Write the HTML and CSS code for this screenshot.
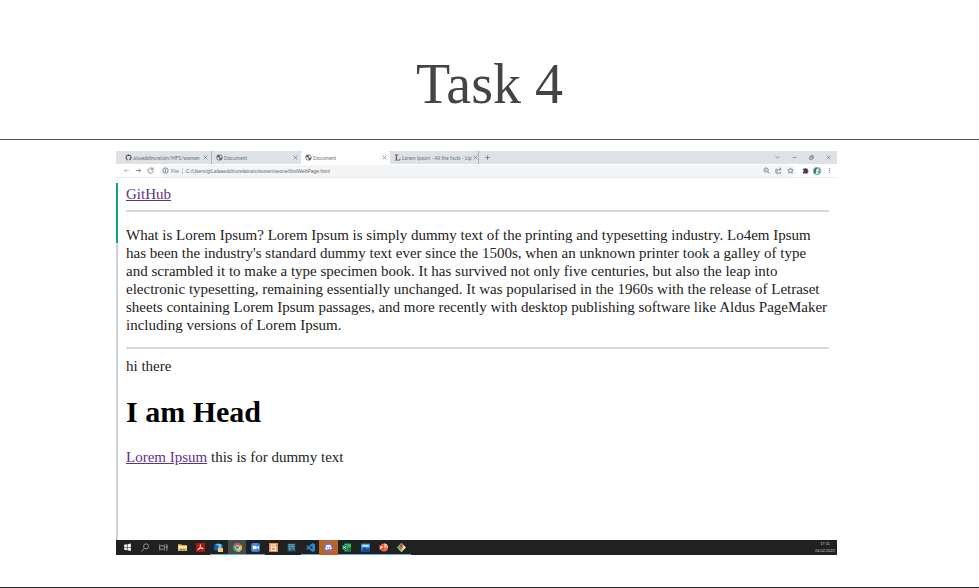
FILE: index.html
```html
<!DOCTYPE html>
<html lang="en">
<head>
<meta charset="utf-8">
<meta name="viewport" content="width=device-width, initial-scale=1">
<title>Task 4</title>
<link rel="stylesheet" href="styles.css">
</head>
<body>
<header class="slide-header"><h1 class="slide-title">Task 4</h1></header>
<main class="slide-body">
  <div class="desktop">
    <div class="tabbar">
      <div class="tab">
        <svg class="icon" viewBox="0 0 16 16"><path fill="#3c4043" d="M8 1a7 7 0 0 0-2.2 13.6c.4.1.5-.1.5-.3v-1.400c-2 .4-2.400-.8-2.400-.8-.5-1-1-1.200-1-1.200 1-.2 1.500.8 1.500.8.7 1.100 1.600.8 2 .6 0-.5.200-.8.500-1C4.700 11 3.700 10.200 3.700 7.800c0-.8.300-1.400.700-1.900-.1-.3-.3-1 .1-1.900 0 0 .6-.2 1.900.7a6.500 6.500 0 0 1 3.400 0c1.300-.9 1.900-.7 1.900-.7.400.9.100 1.600.1 1.900.4.500.7 1.100.7 1.900 0 2.400-1.200 3.200-3.100 3.400.3.300.5.700.5 1.400v1.700c0 .2.100.4.500.3A7 7 0 0 0 8 1z"/></svg>
        <span class="tab-text">alaaeddinurelain/MFS/women</span>
        <button class="tab-close" aria-label="Close tab"><svg class="cross" viewBox="0 0 8 8"><path d="M1 1l6 6M7 1l-6 6"/></svg></button>
      </div>
      <div class="tab divided">
        <svg class="icon" viewBox="0 0 16 16"><circle cx="8" cy="8" r="7" fill="#5f6368"/><path fill="#dee1e6" d="M3 7l4 1 1 3-1 3-4-3zM8 3l5 1v4l-3 1-1-3z"/></svg>
        <span class="tab-text">Document</span>
        <button class="tab-close" aria-label="Close tab"><svg class="cross" viewBox="0 0 8 8"><path d="M1 1l6 6M7 1l-6 6"/></svg></button>
      </div>
      <div class="tab active">
        <svg class="icon" viewBox="0 0 16 16"><circle cx="8" cy="8" r="7" fill="#5f6368"/><path fill="#fff" d="M3 7l4 1 1 3-1 3-4-3zM8 3l5 1v4l-3 1-1-3z"/></svg>
        <span class="tab-text">Document</span>
        <button class="tab-close" aria-label="Close tab"><svg class="cross" viewBox="0 0 8 8"><path d="M1 1l6 6M7 1l-6 6"/></svg></button>
      </div>
      <div class="tab">
        <svg class="icon" viewBox="0 0 16 16"><path fill="#5f6368" d="M2 1h8v2H7v10h5l1-3h2l-1 5H2v-2h2V3H2z"/></svg>
        <span class="tab-text">Lorem Ipsum - All the facts - Lip</span>
        <button class="tab-close" aria-label="Close tab"><svg class="cross" viewBox="0 0 8 8"><path d="M1 1l6 6M7 1l-6 6"/></svg></button>
      </div>
      <button class="new-tab" aria-label="New tab"><svg class="cross" viewBox="0 0 8 8"><path d="M4 0v8M0 4h8"/></svg></button>
      <div class="window-controls">
        <button aria-label="Search tabs"><svg class="cross" viewBox="0 0 8 8"><path d="M1 2l3 3 3-3"/></svg></button>
        <button aria-label="Minimize"><svg class="cross" viewBox="0 0 8 8"><path d="M1 4h6"/></svg></button>
        <button aria-label="Restore"><svg class="cross" viewBox="0 0 8 8"><path d="M1 3h4v4H1zM3 3V1h4v4H5"/></svg></button>
        <button aria-label="Close window"><svg class="cross" viewBox="0 0 8 8"><path d="M1 1l6 6M7 1l-6 6"/></svg></button>
      </div>
    </div>
    <div class="toolbar">
      <button class="tool" aria-label="Back"><svg class="icon line faint" viewBox="0 0 16 16"><path d="M14 8H3M7 4L3 8l4 4"/></svg></button>
      <button class="tool" aria-label="Forward"><svg class="icon line" viewBox="0 0 16 16"><path d="M2 8h11M9 4l4 4-4 4"/></svg></button>
      <button class="tool" aria-label="Reload"><svg class="icon line" viewBox="0 0 16 16"><path d="M13 5a6 6 0 1 0 1 4M14 1v5H9"/></svg></button>
      <div class="omnibox">
        <svg class="icon line" viewBox="0 0 16 16"><circle cx="8" cy="8" r="6"/><path d="M8 7v5M8 4v2"/></svg>
        <label class="scheme" for="address">File</label>
        <input id="address" class="address" type="text" value="C:/Users/g/Lalaaeddinurelainoic/wosen/seone/firstWebPage.html">
        <button class="tool" aria-label="Zoom"><svg class="icon line" viewBox="0 0 16 16"><circle cx="7" cy="7" r="5"/><path d="M11 11l4 4M5 7h4"/></svg></button>
        <button class="tool" aria-label="Share"><svg class="icon line" viewBox="0 0 16 16"><path d="M6 5H2v9h11v-3M5 11c0-4 3-6 8-6M10 2l4 3-4 3"/></svg></button>
        <button class="tool" aria-label="Bookmark"><svg class="icon line" viewBox="0 0 16 16"><path d="M8 2l2 4 4 .5-3 3 1 4.500-4-2-4 2 1-4.500-3-3L6 6z"/></svg></button>
      </div>
      <button class="tool" aria-label="Extensions"><svg class="icon" viewBox="0 0 16 16"><path fill="#3c4043" d="M2 4h4a2 2 0 0 1 4 0h3v4a2 2 0 0 1 0 4v3H2v-4a2 2 0 0 0 0-4z"/></svg></button>
      <button class="tool" aria-label="Profile"><svg class="avatar" viewBox="0 0 16 16"><circle cx="8" cy="8" r="8" fill="#6fa8a5"/><path fill="#e8f0ee" d="M7 3l5 1-1 4-3 1 4 4-7 1 1-6z"/><path fill="#2c6870" d="M4 3l4-1-2 5-1 6-3-3z"/></svg></button>
      <button class="tool" aria-label="Menu"><svg class="icon" viewBox="0 0 16 16"><g fill="#80868b"><circle cx="8" cy="3" r="1.500"/><circle cx="8" cy="8" r="1.500"/><circle cx="8" cy="13" r="1.500"/></g></svg></button>
    </div>
    <article class="page">
      <a class="link" href="#github">GitHub</a>
      <hr class="rule">
      <p class="lorem">What is Lorem Ipsum? Lorem Ipsum is simply dummy text of the printing and typesetting industry. Lo4em Ipsum<br>has been the industry's standard dummy text ever since the 1500s, when an unknown printer took a galley of type<br>and scrambled it to make a type specimen book. It has survived not only five centuries, but also the leap into<br>electronic typesetting, remaining essentially unchanged. It was popularised in the 1960s with the release of Letraset<br>sheets containing Lorem Ipsum passages, and more recently with desktop publishing software like Aldus PageMaker<br>including versions of Lorem Ipsum.</p>
      <hr class="rule">
      <div>hi there</div>
      <h2 class="head">I am Head</h2>
      <div><a class="link" href="#lorem">Lorem Ipsum</a> this is for dummy text</div>
    </article>
    <footer class="taskbar">
      <nav class="apps" aria-label="Apps">
        <button class="app" aria-label="Start"><svg viewBox="0 0 16 16"><path fill="#f4f4f4" d="M2 3l5-1v5H2zM8 2l6-1v6H8zM2 8h5v5l-5-1zM8 8h6v6l-6-1z"/></svg></button>
        <button class="app" aria-label="Search"><svg viewBox="0 0 16 16"><path fill="none" stroke="#aaa" stroke-width="1.500" d="M6 10l-5 5"/><circle cx="9" cy="6" r="4.500" fill="none" stroke="#aaa" stroke-width="1.500"/></svg></button>
        <button class="app" aria-label="Task view"><svg viewBox="0 0 16 16"><path fill="none" stroke="#aaa" stroke-width="1.500" d="M1 5h9v6H1zM1 2v1M10 2v1M1 13v1M10 13v1M14 2v12M12 7h4"/></svg></button>
        <button class="app" aria-label="Files"><svg viewBox="0 0 16 16"><path fill="#e3b94b" d="M0 2h6l1 2h9v10H0z"/><path fill="#fbe68c" d="M0 5h16v5H0z"/><path fill="#5c91b8" d="M4 10h8v4h-2v-2H6v2H4z"/></svg></button>
        <button class="app" aria-label="PDF"><svg viewBox="0 0 16 16"><path fill="#b5120b" d="M0 0h16v16H0z"/><path fill="none" stroke="#fff" stroke-width="1.500" d="M3 12c3-1 6-6 5-9-2 0 1 8 5 7-2-2-7 0-10 2z"/></svg></button>
        <button class="app open" aria-label="Mail"><svg viewBox="0 0 16 16"><path fill="#1479c9" d="M1 2l7-2 7 4v9H1z"/><path fill="#79c8f3" d="M4 2h9v7H4z"/><path fill="#0c62ad" d="M0 4h8v8H0z"/><path fill="#f1ce68" d="M7 9h9v7H7z"/></svg></button>
        <button class="app open current" aria-label="Chrome"><svg viewBox="0 0 16 16"><circle cx="8" cy="8" r="8" fill="#45a75b"/><path fill="#d94d43" d="M1 4a8 8 0 0 1 14 0L8 8z"/><path fill="#e9bd45" d="M15 4a8 8 0 0 1-7 12V8z"/><circle cx="8" cy="8" r="4" fill="#fff"/><circle cx="8" cy="8" r="3" fill="#4b86dc"/></svg></button>
        <button class="app open" aria-label="Meetings"><svg viewBox="0 0 16 16"><rect width="16" height="16" rx="4" fill="#3980e8"/><path fill="#fff" d="M3 5h7v6H3zM11 7l3-2v6l-3-2z"/></svg></button>
        <button class="app" aria-label="Blocks"><svg viewBox="0 0 16 16"><path fill="#e98d50" d="M0 0h16v16H0z"/><path fill="none" stroke="#fff1df" stroke-width="2" d="M4 3h7v4H4zM4 8h8v5H4z"/></svg></button>
        <button class="app" aria-label="Database"><svg viewBox="0 0 16 16"><path fill="#215373" d="M1 1h14v14H1z"/><path stroke="#69a5c5" stroke-width="1.500" fill="none" d="M2 3h12M2 6h12M2 10l5 1 5-4M5 2v12M9 3l4 10"/></svg></button>
        <button class="app open" aria-label="Code"><svg viewBox="0 0 16 16"><path fill="#2489ca" d="M11 0l5 2v12l-5 2-6-6-3 2-2-1 3-3-3-3 2-1 3 2zM11 5L7 8l4 3z"/></svg></button>
        <button class="app alert" aria-label="Chat"><svg viewBox="0 0 16 16"><circle cx="8" cy="8" r="8" fill="#6973dc"/><path fill="#fff" d="M4 4q4-2 8 0l2 7-3 1-1-1H6l-1 1-3-1z"/><circle cx="6" cy="8" r="1.200" fill="#6973dc"/><circle cx="10" cy="8" r="1.200" fill="#6973dc"/><circle cx="13" cy="13" r="3" fill="#e34e58"/></svg></button>
        <button class="app open" aria-label="Spreadsheet"><svg viewBox="0 0 16 16"><path fill="#31b66c" d="M4 1h12v14H4z"/><path fill="#127a42" d="M0 4h9v8H0zM10 8h6v7h-6z"/><path stroke="#fff" stroke-width="1.500" d="M2 6l5 4M7 6l-5 4"/></svg></button>
        <button class="app open" aria-label="Photos"><svg viewBox="0 0 16 16"><path fill="#2389dc" d="M0 1h16v14H0z"/><path fill="#b9e1ff" d="M2 3h12v4H2z"/><path fill="#0c5293" d="M0 14l6-7 4 4 3-3 3 4v3H0z"/></svg></button>
        <button class="app open" aria-label="Slides"><svg viewBox="0 0 16 16"><circle cx="9" cy="8" r="7" fill="#ed6c47"/><path fill="#ffaf91" d="M9 1a7 7 0 0 1 7 7H9z"/><path fill="#b83b1d" d="M0 4h8v8H0z"/><path stroke="#fff" stroke-width="1.500" fill="none" d="M3 11V6h3v3H3"/></svg></button>
        <button class="app open" aria-label="Git"><svg viewBox="0 0 16 16"><path fill="#e9e6dc" d="M8 0l8 8-8 8-8-8z"/><path fill="#d8664e" d="M8 0l4 4-4 3-4-3z"/><path fill="#58a665" d="M0 8l4-4 3 4-3 4z"/><path fill="#e3bd4d" d="M4 12l4-3 4 3-4 4z"/><path fill="none" stroke="#333" stroke-width="1.500" d="M7 4v8M7 5l4 4"/></svg></button>
      </nav>
      <div class="clock"><time>17:11</time><time>24.02.2022</time></div>
    </footer>
  </div>
</main>
</body>
</html>
```
FILE: styles.css
```css
* { box-sizing: border-box; }
body {
  margin: 0;
  min-height: 100vh;
  display: flex;
  flex-direction: column;
  background: #fff;
  border-bottom: 1px solid #262626;
  font-family: "Liberation Serif", serif;
}
button {
  display: flex;
  align-items: center;
  justify-content: center;
  padding: 0;
  border: 0;
  background: none;
}
svg { display: block; }
.slide-header {
  padding: 52px 0 23px;
  border-bottom: 1px solid #555;
  text-align: center;
}
.slide-title {
  margin: 0;
  color: #444;
  font-size: 56px;
  font-weight: 400;
  line-height: 64px;
}
.slide-body { padding: 11px 142px 32px 116px; }

/* Browser chrome */
.tabbar {
  display: flex;
  height: 13px;
  background: #dee1e6;
  font-family: Lato, "Liberation Sans", sans-serif;
}
.tab {
  display: flex;
  flex: 0 1 89px;
  align-items: center;
  gap: 1px;
  min-width: 0;
  padding: 0 3px 0 4px;
}
.tab:first-child {
  flex-basis: 96px;
  padding-left: 9px;
  border-right: 1px solid #b0b4ba;
}
.tab:nth-child(4) { border-right: 1px solid #b0b4ba; }
.tab.active { background: #fff; border-radius: 3px 3px 0 0; }
.tab-text {
  flex: 1;
  color: #6c7075;
  font-size: 5px;
  line-height: 8px;
  white-space: nowrap;
}
.icon { flex: none; width: 7px; height: 7px; }
.line { fill: none; stroke: #777b80; stroke-width: 2; }
.faint { stroke: #b8bcc0; }
.cross { width: 5px; height: 5px; fill: none; stroke: #5f6368; stroke-width: 1; }
.new-tab { width: 17px; }
.window-controls { display: flex; margin-left: auto; }
.window-controls button { width: 17px; }
.toolbar {
  display: flex;
  align-items: center;
  height: 14px;
  padding: 0 2px 0 4px;
  border-bottom: 1px solid #e9ebed;
  font-family: "Liberation Sans", sans-serif;
}
.tool { flex: none; width: 12px; height: 12px; }
.omnibox {
  display: flex;
  flex: 1;
  align-items: center;
  margin: 0 3px 0 4px;
  padding-left: 2px;
  border-radius: 6px;
  background: #f3f4f5;
}
.scheme {
  margin-left: 2px;
  padding-right: 3px;
  border-right: 1px solid #c4c7ca;
  color: #777b80;
  font-size: 5px;
  line-height: 6px;
}
.address {
  flex: 1;
  min-width: 0;
  height: 12px;
  padding: 0 0 0 3px;
  border: 0;
  background: none;
  color: #666a6f;
  font: 5px "Liberation Sans", sans-serif;
}
.avatar { width: 8px; height: 8px; }

/* Document content */
.page {
  min-height: 362px;
  padding: 7px 8px 0;
  border-left: 2px solid;
  border-image: linear-gradient(#fff 6px, #0ca678 6px, #0ca678 66px, #ced4da 66px) 1;
  color: #222;
  font-size: 15px;
  line-height: 18px;
}
.link { color: #60318a; text-decoration: underline; }
.rule { height: 2px; margin: 7px 0 8px; border: 0; background: #dadada; }
.lorem { margin: 14px 0 13px; white-space: nowrap; }
.head {
  margin: 20px 0 19px;
  color: #000;
  font-size: 30px;
  line-height: 34px;
}

/* Taskbar */
.taskbar {
  display: flex;
  justify-content: space-between;
  height: 15px;
  padding: 0 2px;
  background: #202121;
}
.apps { display: flex; width: 293px; }
.app { flex: 1; border-bottom: 1px solid transparent; }
.app svg { width: 9px; height: 9px; }
.app.open { border-bottom-color: #6aa5cd; }
.app.current { background: #484d4c; }
.app.alert { background: #b76427; }
.clock {
  display: flex;
  flex-direction: column;
  align-items: center;
  color: #d0d0d0;
  font: 4px/7px "Liberation Sans", sans-serif;
}
```
